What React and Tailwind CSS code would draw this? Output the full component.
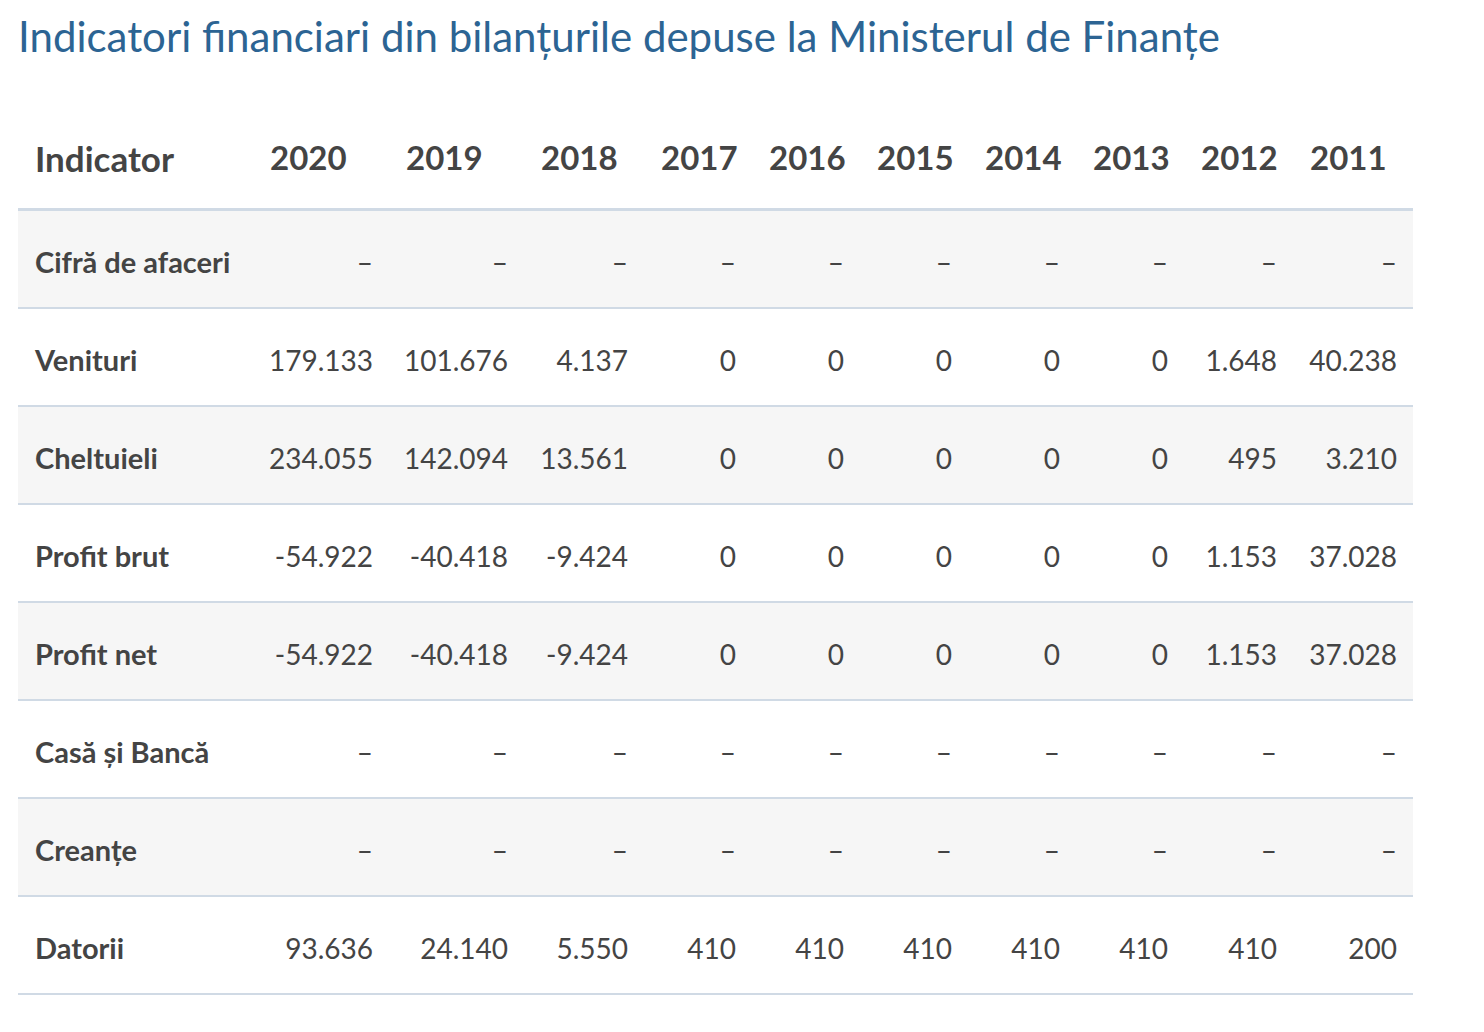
const YEARS = ['2020', '2019', '2018', '2017', '2016', '2015', '2014', '2013', '2012', '2011'];

const D = '–';
const ROWS = [
  { name: 'Cifră de afaceri', values: [D, D, D, D, D, D, D, D, D, D] },
  { name: 'Venituri', values: ['179.133', '101.676', '4.137', '0', '0', '0', '0', '0', '1.648', '40.238'] },
  { name: 'Cheltuieli', values: ['234.055', '142.094', '13.561', '0', '0', '0', '0', '0', '495', '3.210'] },
  { name: 'Profit brut', values: ['-54.922', '-40.418', '-9.424', '0', '0', '0', '0', '0', '1.153', '37.028'] },
  { name: 'Profit net', values: ['-54.922', '-40.418', '-9.424', '0', '0', '0', '0', '0', '1.153', '37.028'] },
  { name: 'Casă și Bancă', values: [D, D, D, D, D, D, D, D, D, D] },
  { name: 'Creanțe', values: [D, D, D, D, D, D, D, D, D, D] },
  { name: 'Datorii', values: ['93.636', '24.140', '5.550', '410', '410', '410', '410', '410', '410', '200'] },
];

const GRID = 'grid grid-cols-[235px_136px_135px_120px_108px_108px_108px_108px_108px_109px_120px]';

export default function App() {
  return (
    <div className="min-h-screen bg-white px-[18px] text-[#444444]" style={{ fontFamily: 'Lato, "Open Sans", sans-serif' }}>
      <h1 className="pt-[12px] mb-[47px] text-[42px] leading-[49px] font-normal text-[#2c6493] whitespace-nowrap">
        Indicatori financiari din bilanțurile depuse la Ministerul de Finanțe
      </h1>

      <div className="w-[1395px]">
        {/* header */}
        <div className={`${GRID} h-[103px] items-center border-b-[3px] border-[#d0dae5] text-[33px] font-bold`}>
          <div className="pl-[17px] text-[35px]">Indicator</div>
          {YEARS.map((y) => (
            <div key={y} className="pl-[17px]">{y}</div>
          ))}
        </div>

        {ROWS.map((row, i) => (
          <div
            key={row.name}
            className={`${GRID} h-[98px] pt-[5px] items-center border-b-2 border-[#d0dae5] text-[28px] ${i % 2 === 0 ? 'bg-[#f6f6f6]' : 'bg-white'}`}
          >
            <div className="pl-[17px] text-[29px] font-bold">{row.name}</div>
            {row.values.map((v, j) => (
              <div key={j} className="pr-[16px] text-right">{v}</div>
            ))}
          </div>
        ))}
      </div>
    </div>
  );
}
